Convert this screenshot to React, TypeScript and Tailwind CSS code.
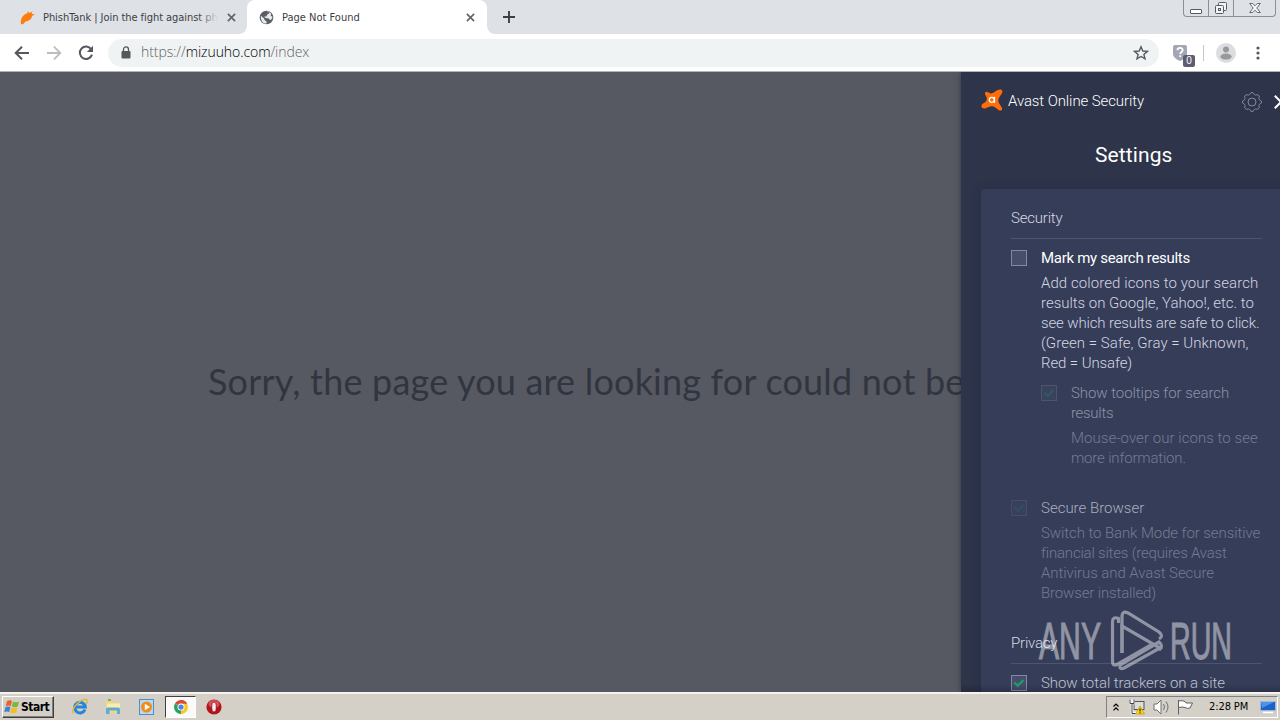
import type { ReactNode } from "react";
import clsx from "clsx";

type CheckboxProps = {
  checked?: boolean;
  className?: string;
};

function Checkbox({ checked, className }: CheckboxProps) {
  return (
    <span
      className={clsx(
        "mt-0.5 flex h-4 w-4 shrink-0 items-center justify-center border border-[#8289a0] bg-[#454e6b]",
        className
      )}
    >
      {checked && (
        <svg viewBox="0 0 12 12" className="h-3 w-3" fill="none" stroke="#1f9f68" strokeWidth="2.4">
          <path d="M1.5 5.5 L4.8 8.8 L10.5 3" />
        </svg>
      )}
    </span>
  );
}

function Lines({ lines, className }: { lines: [string, string][]; className?: string }) {
  return (
    <div className={clsx("text-[15px] leading-5 whitespace-nowrap", className)}>
      {lines.map(([text, tracking]) => (
        <p key={text} className={tracking}>
          {text}
        </p>
      ))}
    </div>
  );
}

function CloseIcon() {
  return (
    <svg viewBox="0 0 10 10" className="h-[9px] w-[9px] shrink-0" stroke="#5f6368" strokeWidth="1.8">
      <path d="M1 1 L9 9 M9 1 L1 9" />
    </svg>
  );
}

function GlobeIcon() {
  return (
    <svg viewBox="0 0 16 16" className="h-[15px] w-[15px] shrink-0">
      <circle cx="8" cy="8" r="7.3" fill="#5a5e63" />
      <path d="M2 6 L5.5 9 L6 11 L8 12 L8 14.5 C4 14.5 1.5 11 2 6 Z" fill="#e8eaed" />
      <path d="M8 2 L11 2.3 L10.5 4 L8.5 5 L8 7 L5.5 7 L7 8.5 L10.5 9 L12 11 L14 9 L14.3 7 L12.5 6.5 L13 4 L10 1.6 Z" fill="#e8eaed" />
    </svg>
  );
}

function TabStrip() {
  return (
    <div className="relative flex h-[34px] bg-[#dee1e6] font-['DejaVu_Sans_Condensed','DejaVu_Sans',sans-serif] text-[11px] text-[#3c4043]">
      <div className="flex w-[247px] items-center pl-5">
        <svg viewBox="0 0 16 16" className="h-4 w-4 shrink-0">
          <path d="M1 15 C0 10 3 5.5 7 4.5 L8 2 L9 4 L12.5 2.5 L11.5 5 L15 5 L12 7 C12 11 7 12 5 13 C3.5 15.5 2 15.5 1 15 Z" fill="#ff7d0d" />
        </svg>
        <div className="relative top-px ml-[7px] w-[175px] overflow-hidden tracking-[-0.06px] whitespace-nowrap">
          PhishTank | Join the fight against ph
          <span className="absolute inset-y-0 right-0 w-5 bg-gradient-to-r from-transparent to-[#dee1e6]" />
        </div>
        <div className="ml-[9px]">
          <CloseIcon />
        </div>
      </div>
      <div className="relative flex w-[240px] items-center rounded-t-lg bg-white pl-3">
        <svg viewBox="0 0 8 8" className="absolute bottom-0 -left-2 h-2 w-2">
          <path d="M8 0 V8 H0 A8 8 0 0 0 8 0" fill="#fff" />
        </svg>
        <svg viewBox="0 0 8 8" className="absolute -right-2 bottom-0 h-2 w-2">
          <path d="M0 0 V8 H8 A8 8 0 0 1 0 0" fill="#fff" />
        </svg>
        <GlobeIcon />
        <span className="relative top-px ml-2 w-[184px] tracking-[0px]">Page Not Found</span>
        <CloseIcon />
      </div>
      <svg viewBox="0 0 12 12" className="mt-[11px] ml-4 h-3 w-3" stroke="#3c4043" strokeWidth="1.9">
        <path d="M6 0 V12 M0 6 H12" />
      </svg>
      <div className="absolute top-0 right-[4px] flex h-[17px] w-[93px] rounded-b border border-t-0 border-[#8a8f99]">
        <div className="flex w-[25px] justify-center border-r border-[#8a8f99]">
          <span className="mt-[9px] h-[5px] w-3 rounded-[1px] border border-[#555b66] bg-white" />
        </div>
        <div className="flex w-[25px] justify-center border-r border-[#8a8f99]">
          <svg viewBox="0 0 14 13" className="mt-[2px] h-[13px] w-3.5" fill="#f2f3f5" stroke="#555b66">
            <rect x="4.5" y="0.5" width="8" height="8" rx="1" />
            <rect x="1.5" y="3.5" width="8" height="8" rx="1" />
            <rect x="4.5" y="6.5" width="2" height="2" />
          </svg>
        </div>
        <div className="flex flex-1 justify-center">
          <svg viewBox="0 0 12 10" className="mt-[3px] h-2.5 w-3" fill="#f5f6f7" stroke="#555b66" strokeWidth="0.9">
            <path d="M0.7 0.5 H3.7 L6 2.8 L8.3 0.5 H11.3 L7.8 5 L11.3 9.5 H8.3 L6 7.2 L3.7 9.5 H0.7 L4.2 5 Z" />
          </svg>
        </div>
      </div>
    </div>
  );
}

function Toolbar() {
  return (
    <div className="flex h-[38px] items-center border-b border-[#aeb4b8] bg-white pl-[14px]">
      <svg viewBox="0 0 16 16" className="h-4 w-4" fill="none" stroke="#55595e" strokeWidth="2">
        <path d="M15 8 H2 M8 1.7 L1.7 8 L8 14.3" />
      </svg>
      <svg viewBox="0 0 16 16" className="ml-4 h-4 w-4" fill="none" stroke="#babcbe" strokeWidth="1.8">
        <path d="M1 8 H14 M8 1.7 L14.3 8 L8 14.3" />
      </svg>
      <svg viewBox="0 0 16 16" className="ml-4 h-4 w-4" fill="none" stroke="#55595e" strokeWidth="2">
        <path d="M13.2 4.2 A6.2 6.2 0 1 0 14 9.6" />
        <path d="M15 0.8 V7 H8.8 Z" fill="#55595e" stroke="none" />
      </svg>
      <div className="ml-[14px] flex h-7 w-[1051px] items-center rounded-full bg-[#f0f3f4] pl-[13px]">
        <svg viewBox="0 0 10 13" className="h-[13px] w-2.5">
          <rect x="0.5" y="5" width="9" height="7.5" rx="1" fill="#55595e" />
          <path d="M2.5 5.5 V3.4 A2.5 2.5 0 0 1 7.5 3.4 V5.5" fill="none" stroke="#55595e" strokeWidth="1.3" />
        </svg>
        <span className="relative -top-px ml-[10px] font-['Open_Sans',sans-serif] text-sm font-light tracking-[-0.08px] text-[#5f6368]">
          https://<span className="text-black">mizuuho.com</span>/index
        </span>
        <svg viewBox="0 0 16 16" className="mr-[10px] ml-auto h-4 w-4" fill="none" stroke="#55595e" strokeWidth="1.4">
          <path d="M8 1.8 L9.8 6 L14.4 6.4 L10.9 9.4 L12 13.9 L8 11.5 L4 13.9 L5.1 9.4 L1.6 6.4 L6.2 6 Z" />
        </svg>
      </div>
      <div className="relative ml-[14px] h-5 w-[22px]">
        <svg viewBox="0 0 14 16" className="mt-0.5 h-4 w-3.5">
          <path d="M2 0 H12 Q14 0 14 2 V9 Q14 13 7 16 Q0 13 0 9 V2 Q0 0 2 0" fill="#a3a7b3" />
          <path d="M4.5 5.3 C4.5 2.2 9.7 2.2 9.7 5.2 C9.7 7 7.2 7 7.2 9 M7.2 10.3 V12" fill="none" stroke="#fff" strokeWidth="1.8" />
        </svg>
        <span className="absolute top-3 left-[10px] flex h-3 w-3 items-center justify-center rounded-[2px] bg-[#5c5d70] font-['Liberation_Sans',sans-serif] text-[10px] text-white">
          0
        </span>
      </div>
      <span className="ml-2 h-4 w-px bg-[#c4c7cb]" />
      <svg viewBox="0 0 20 20" className="ml-3 h-5 w-5">
        <circle cx="10" cy="10" r="10" fill="#dcdddf" />
        <circle cx="10" cy="6.5" r="3" fill="#97999c" />
        <ellipse cx="10" cy="13.6" rx="5.6" ry="3" fill="#97999c" />
      </svg>
      <svg viewBox="0 0 4 14" className="ml-5 h-3.5 w-1" fill="#55595e">
        <circle cx="2" cy="2" r="1.6" />
        <circle cx="2" cy="7" r="1.6" />
        <circle cx="2" cy="12" r="1.6" />
      </svg>
    </div>
  );
}

function Section({ title, children, className }: { title: string; children: ReactNode; className?: string }) {
  return (
    <section className={className}>
      <h2 className="h-[31px] w-[251px] border-b border-[#4b5470] text-[15px] leading-5 tracking-[-0.2px] text-[#d6d9e3]">
        {title}
      </h2>
      {children}
    </section>
  );
}

function AvastPanel() {
  return (
    <aside className="absolute inset-y-0 left-[961px] w-[340px] bg-[#2e3449] font-[Roboto,sans-serif] font-light shadow-[0_0_6px_rgba(30,34,50,0.6)]">
      <header className="flex h-[58px] items-center pl-5">
        <svg viewBox="0 0 22 22" className="mb-0.5 h-[22px] w-[22px]">
          <path
            d="M4.2 3.6 C5 2.4 6.4 2.6 7.6 3.6 C9.2 4.9 11.5 4.6 13.6 3 C15.6 1.4 17.6 0.2 19.8 0.5 C21.6 0.9 21.8 3 20.8 4.6 C19.2 7.2 17.2 9 17.4 12 C17.6 14.8 20 16.4 21 19 C21.6 21.2 20 22.2 18 21.2 C15.8 20.2 15 18 12.2 17.4 C9.4 16.8 7 18.4 4.8 19.2 C2.4 20 0.2 18.8 0.4 17 C0.6 14.8 3.2 14.4 4.8 12.6 C6.4 10.8 6 8.6 4.8 6.8 C4 5.6 3.6 4.6 4.2 3.6 Z"
            fill="#ff6c0a"
          />
          <circle cx="10.8" cy="10.8" r="2.5" fill="none" stroke="#fff" strokeWidth="1.3" />
          <path d="M13.5 7.8 V13.9" stroke="#fff" strokeWidth="1.3" />
        </svg>
        <span className="ml-[5px] w-[234px] text-[15px] tracking-[-0.1px] text-white">Avast Online Security</span>
        <svg viewBox="0 0 20 20" className="mt-px h-5 w-5" fill="none" stroke="#868b9c" strokeWidth="1">
          <path d="M7.6 2.6 L9 0.6 H11 L12.4 2.6 L13.4 3.1 L15.8 2.7 L17.3 4.2 L16.9 6.6 L17.3 7.6 L19.4 9 V11 L17.3 12.4 L16.9 13.4 L17.3 15.8 L15.8 17.3 L13.4 16.9 L12.4 17.4 L11 19.4 H9 L7.6 17.4 L6.6 16.9 L4.2 17.3 L2.7 15.8 L3.1 13.4 L2.7 12.4 L0.6 11 V9 L2.7 7.6 L3.1 6.6 L2.7 4.2 L4.2 2.7 L6.6 3.1 Z" strokeLinejoin="round" />
          <circle cx="10" cy="10" r="4" />
        </svg>
        <svg viewBox="0 0 14 14" className="mt-0.5 ml-3 h-3.5 w-3.5" stroke="#fff" strokeWidth="2">
          <path d="M0.8 0.8 L13.2 13.2 M13.2 0.8 L0.8 13.2" />
        </svg>
      </header>
      <h1 className="mt-[11px] pl-[134px] text-[21px] leading-7 font-normal tracking-[0.1px] text-white">Settings</h1>
      <div className="mt-5 ml-5 h-[560px] rounded-tl bg-[#363d59] pt-[19px] pl-[30px] shadow-[0_0_8px_rgba(32,40,68,0.5)]">
        <Section title="Security">
          <div className="mt-[9px] flex gap-[14px]">
            <Checkbox />
            <div>
              <Lines className="font-normal text-white" lines={[["Mark my search results", "tracking-[-0.3px]"]]} />
              <Lines
                className="mt-[5px] text-[#d3d6e0]"
                lines={[
                  ["Add colored icons to your search", "tracking-[0.08px]"],
                  ["results on Google, Yahoo!, etc. to", "tracking-[-0.02px]"],
                  ["see which results are safe to click.", "tracking-[-0.14px]"],
                  ["(Green = Safe, Gray = Unknown,", "tracking-[0.06px]"],
                  ["Red = Unsafe)", "tracking-[-0.1px]"],
                ]}
              />
              <div className="mt-[10px] flex gap-[14px]">
                <Checkbox checked className="opacity-30" />
                <div>
                  <Lines
                    className="text-[#8d93a6]"
                    lines={[
                      ["Show tooltips for search", "tracking-[-0.06px]"],
                      ["results", "tracking-[-0.3px]"],
                    ]}
                  />
                  <Lines
                    className="mt-[5px] text-[#747b92]"
                    lines={[
                      ["Mouse-over our icons to see", "tracking-[0.05px]"],
                      ["more information.", "tracking-[-0.18px]"],
                    ]}
                  />
                </div>
              </div>
            </div>
          </div>
          <div className="mt-[30px] flex gap-[14px]">
            <Checkbox checked className="opacity-20" />
            <div>
              <Lines className="text-[#a9aebe]" lines={[["Secure Browser", "tracking-[0px]"]]} />
              <Lines
                className="mt-[5px] text-[#747b92]"
                lines={[
                  ["Switch to Bank Mode for sensitive", "tracking-[-0.09px]"],
                  ["financial sites (requires Avast", "tracking-[-0.2px]"],
                  ["Antivirus and Avast Secure", "tracking-[-0.07px]"],
                  ["Browser installed)", "tracking-[-0.15px]"],
                ]}
              />
            </div>
          </div>
        </Section>
        <Section title="Privacy" className="mt-[30px]">
          <div className="mt-[9px] flex gap-[14px]">
            <Checkbox checked />
            <Lines className="text-[#c1c5d3]" lines={[["Show total trackers on a site", "tracking-[-0.06px]"]]} />
          </div>
        </Section>
      </div>
    </aside>
  );
}

function Watermark() {
  return (
    <div className="absolute top-[538px] left-[1039px] flex h-[62px] w-[194px] items-center font-['Liberation_Sans',sans-serif] text-[52px] leading-none text-white opacity-45 [-webkit-text-stroke:1px_white]">
      <span className="w-[71px]">
        <span className="inline-block origin-left scale-x-[0.58]">ANY</span>
      </span>
      <svg viewBox="0 0 56 62" className="h-[62px] w-14 shrink-0" fill="none" stroke="#fff" strokeWidth="3.2">
        <path d="M8.5 13 V8.5 Q2.5 6 2.5 12 V51 Q2.5 57 8 54 L41 35" />
        <path d="M12 43 V7 Q12 0 18 3 L49 22 Q54 26 49 29" />
        <path d="M12 43 V16 L50 38 L14 58 Q9 60 10 55 L49 32 Q54 36 49 40" />
      </svg>
      <span className="ml-[4px] w-[64px]">
        <span className="inline-block origin-left scale-x-[0.55]">RUN</span>
      </span>
    </div>
  );
}

function WindowsFlag() {
  return (
    <svg viewBox="0 0 16 16" className="h-4 w-4">
      <path d="M3 2 Q6 0.5 8 2 L6.8 7 Q4.5 5.8 1.8 7 Z" fill="#e8622c" />
      <path d="M9 2.5 Q12 4 15 2.5 L13.8 7.5 Q11 9 7.8 7.5 Z" fill="#7cb541" />
      <path d="M1.5 8 Q4 7 6.5 8 L5.2 13 Q3 12 0.3 13 Z" fill="#3f83d0" />
      <path d="M7.5 8.5 Q10.5 10 13.5 8.5 L12.3 13.5 Q9 15 6.2 13.5 Z" fill="#f5bd24" />
    </svg>
  );
}

function Taskbar() {
  return (
    <footer className="flex h-7 items-center border-t-2 border-[#f4f3f0] bg-[#d4d0c8] pl-[2px] text-black">
      <button className="flex h-[22px] w-[52px] items-center border border-t-white border-r-[#404040] border-b-[#404040] border-l-white pl-px shadow-[inset_-1px_-1px_#808080]">
        <WindowsFlag />
        <span className="ml-px font-['DejaVu_Sans_Condensed','DejaVu_Sans',sans-serif] text-[12px] font-bold tracking-[-0.5px]">Start</span>
      </button>
      <svg viewBox="0 0 18 18" className="ml-[17px] h-[18px] w-[18px]" fill="none">
        <path d="M14 11.5 A5.3 5.3 0 1 1 14.3 8.9 H5" stroke="#2586d9" strokeWidth="3" />
        <path d="M2.5 15.5 C-1 13 7 3 13 1.5 C17.5 0.5 16.5 4.5 15 6" stroke="#e3b532" strokeWidth="1.4" />
      </svg>
      <svg viewBox="0 0 18 18" className="ml-[15px] h-[18px] w-[18px]">
        <path d="M2 3 H7 L8 4.5 H15 V15 H2 Z" fill="#eed77c" />
        <path d="M3 5.5 H16 V12 H3 Z" fill="#f8ecae" />
        <path d="M4 2 H7" stroke="#5ca54f" strokeWidth="1.5" />
        <path d="M2 16 V11 Q2 9.5 4 9.5 H14 Q16 9.5 16 11 V16 H13 V12.5 H5.5 V16 Z" fill="#62a9d6" />
      </svg>
      <svg viewBox="0 0 18 18" className="ml-4 h-[18px] w-[18px]">
        <rect x="1.5" y="1.5" width="14" height="15" fill="#b6d8f3" stroke="#4d8fcb" />
        <circle cx="8.5" cy="9" r="5.5" fill="#f38b19" />
        <path d="M6.8 5.7 V12.3 L12 9 Z" fill="#fff" />
      </svg>
      <div className="ml-[9px] flex h-[22px] w-[31px] items-center justify-center border border-t-[#404040] border-r-white border-b-white border-l-[#404040] bg-[#fafafa]">
        <svg viewBox="0 0 16 16" className="h-3.5 w-3.5">
          <path d="M8 8 L1.1 4 A8 8 0 0 1 14.9 4 Z" fill="#dc4937" />
          <path d="M8 8 L14.9 4 A8 8 0 0 1 8 16 Z" fill="#f9c827" />
          <path d="M8 8 L8 16 A8 8 0 0 1 1.1 4 Z" fill="#27a35a" />
          <path d="M8 4 H14.9 L11.5 10 Z" fill="#f9c827" />
          <path d="M8 4 H14.9 A8 8 0 0 0 8 0 Z" fill="#dc4937" />
          <circle cx="8" cy="8" r="4" fill="#fff" />
          <circle cx="8" cy="8" r="3" fill="#4a86e8" />
        </svg>
      </div>
      <svg viewBox="0 0 16 16" className="ml-[10px] h-4 w-4">
        <circle cx="8" cy="8" r="7.6" fill="#b5121b" />
        <ellipse cx="8" cy="5" rx="5.5" ry="4" fill="#d9515a" />
        <ellipse cx="8" cy="8" rx="2.3" ry="5" fill="#f3eded" stroke="#8a0a12" strokeWidth="0.8" />
      </svg>
      <div className="mr-[2px] ml-auto flex h-[22px] w-[172px] items-center border border-t-[#808080] border-r-white border-b-white border-l-[#808080]">
        <svg viewBox="0 0 6 8" className="ml-[6px] h-2 w-1.5" fill="none" stroke="#000" strokeWidth="1.2">
          <path d="M0.5 3.5 L3 1 L5.5 3.5 M0.5 7.3 L3 4.8 L5.5 7.3" />
        </svg>
        <svg viewBox="0 0 16 16" className="ml-[10px] h-4 w-4">
          <rect x="5" y="2.5" width="10" height="8" fill="#ddd" stroke="#555" />
          <path d="M1.5 0.5 V4 H4.5 V0.5 M3 4 V14 H8" fill="none" stroke="#fff" strokeWidth="2.5" />
          <path d="M1 0.5 V4.5 H5 V0.5 M3 4.5 V14.5 H8" fill="none" stroke="#444" />
          <path d="M11 7 L15.5 15 H6.5 Z" fill="#fbd70c" stroke="#b98d00" strokeWidth="0.6" />
          <path d="M11 9.5 V12.5 M11 13.3 V14.3" stroke="#000" />
        </svg>
        <svg viewBox="0 0 17 16" className="ml-2 h-4 w-[17px]" fill="#fff" stroke="#707070" strokeWidth="1">
          <path d="M1 5 H4 L8 1 V15 L4 11 H1 Z" />
          <path d="M10.5 5 Q12.5 8 10.5 11 M13 2.5 Q17 8 13 13.5" fill="none" />
        </svg>
        <svg viewBox="0 0 17 16" className="ml-[7px] h-4 w-[17px]" fill="#fff" stroke="#606060" strokeWidth="1">
          <path d="M1.5 1 V15.5 M2 2 Q5 1 8 2.5 L9 4 H15.5 L13 9 Q10 10 8 8.5 Q5 7.5 2 8.5" />
        </svg>
        <span className="ml-[15px] w-[41px] font-['DejaVu_Sans_Condensed','DejaVu_Sans',sans-serif] text-[11px] tracking-[-0.1px] whitespace-nowrap">2:28 PM</span>
        <svg viewBox="0 0 16 14" className="ml-[10px] h-3.5 w-4">
          <rect x="0.5" y="1.5" width="15" height="9" fill="#1f62c5" stroke="#9bb9df" />
          <path d="M1 2 H14 L2 8 Z" fill="#4c94e8" />
          <path d="M3 12.5 H13" stroke="#fff" strokeWidth="1.5" />
        </svg>
      </div>
    </footer>
  );
}

export default function App() {
  return (
    <div className="flex h-[720px] w-[1280px] flex-col overflow-hidden">
      <TabStrip />
      <Toolbar />
      <main className="relative flex-1 overflow-hidden bg-[#565962]">
        <p className="mt-[284px] ml-[208px] font-[Lato,sans-serif] text-[36px] leading-[50px] tracking-[0.2px] whitespace-nowrap text-[#31353f]">
          Sorry, the page you are looking for could not be
        </p>
        <AvastPanel />
        <Watermark />
        <div className="absolute right-0 bottom-0 left-[961px] h-2 bg-gradient-to-b from-transparent to-black/20" />
      </main>
      <Taskbar />
    </div>
  );
}
